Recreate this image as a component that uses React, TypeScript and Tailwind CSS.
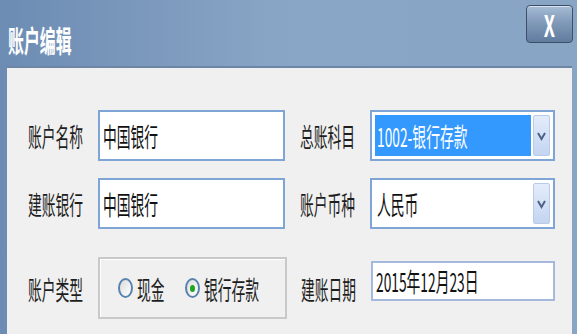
import React from 'react';

const font = { fontFamily: '"Noto Sans CJK SC", "Noto Sans", sans-serif' };

function Squeeze({ children, className = '' }: { children: React.ReactNode; className?: string }) {
  // the dialog in the picture is narrowed horizontally, so glyphs are tall and thin
  return (
    <span className={`inline-block origin-left scale-x-[0.53] whitespace-nowrap leading-none ${className}`}>
      {children}
    </span>
  );
}

function Label({ text }: { text: string }) {
  return (
    <div className="w-[70px] shrink-0 overflow-hidden text-[26px] text-[#1e1e1e]">
      <Squeeze>{text}</Squeeze>
    </div>
  );
}

function TextBox({ value, className = '' }: { value: string; className?: string }) {
  return (
    <div className={`flex shrink-0 items-center overflow-hidden bg-white border-2 border-[#7fa5d6] pl-[3px] text-[26px] text-[#111] ${className}`}>
      <Squeeze>{value}</Squeeze>
    </div>
  );
}

function Combo({ value, selected }: { value: string; selected?: boolean }) {
  return (
    <div className="flex h-[51px] w-[185px] shrink-0 items-stretch border-2 border-[#7fa5d6] bg-white p-[3px]">
      <div className={`flex min-w-0 flex-1 items-center overflow-hidden pl-[2px] text-[26px] ${selected ? 'bg-[#3399ff] text-white' : 'text-[#111]'}`}>
        <Squeeze>{value}</Squeeze>
      </div>
      <div className="ml-[2px] flex w-[17px] shrink-0 items-center justify-center rounded-[2px] border border-[#b9cbe8] bg-gradient-to-b from-[#e3ecfb] to-[#c4d5f1]">
        <svg width="9" height="10" viewBox="0 0 9 10">
          <path d="M1 2 L4.5 8 L8 2" fill="none" stroke="#4d6185" strokeWidth="2" />
        </svg>
      </div>
    </div>
  );
}

function Radio({ checked, label }: { checked?: boolean; label: string }) {
  return (
    <div className="flex items-center gap-[4px]">
      <div className="flex h-[20px] w-[15px] items-center justify-center rounded-[50%] border-2 border-[#5a82ae] bg-gradient-to-br from-[#dcdcdc] to-white">
        {checked && <div className="h-[7px] w-[5px] rounded-[50%] bg-[#1fa51f]" />}
      </div>
      <div className="overflow-hidden text-[26px] text-[#1e1e1e]" style={{ width: label.length * 14 }}>
        <Squeeze>{label}</Squeeze>
      </div>
    </div>
  );
}

export default function App() {
  return (
    <div className="h-[334px] w-[577px] overflow-hidden bg-gradient-to-r from-[#6d8cb3] via-[#8aa6c6] to-[#89a5c5]" style={font}>
      {/* Title bar */}
      <div className="flex h-[66px] items-start justify-between pl-[8px] pr-[4px]">
        <div className="mt-[17px] text-[30px] font-bold text-white">
          <Squeeze className="scale-x-[0.5]">账户编辑</Squeeze>
        </div>
        <div className="mt-[5px] flex h-[38px] w-[47px] items-center justify-center rounded-[4px] border border-[#3d4f68] bg-gradient-to-b from-[#a6bcd6] via-[#7e97b6] to-[#5f7c9f] shadow-[inset_0_1px_0_rgba(255,255,255,0.6)]">
          <span className="text-[30px] font-bold leading-none text-white">
            <span className="inline-block scale-x-[0.6]">X</span>
          </span>
        </div>
      </div>

      {/* Client area */}
      <div className="ml-[7px] mr-[5px] h-[268px] border-t-2 border-[#6e86a6] bg-[#f0f0f0]">
        <div className="flex flex-col pl-[21px] pt-[42px]">
          <div className="flex h-[51px] items-center">
            <Label text="账户名称" />
            <TextBox value="中国银行" className="h-[51px] w-[187px]" />
            <div className="w-[15px]" />
            <Label text="总账科目" />
            <Combo value="1002-银行存款" selected />
          </div>

          <div className="mt-[17px] flex h-[51px] items-center">
            <Label text="建账银行" />
            <TextBox value="中国银行" className="h-[51px] w-[187px]" />
            <div className="w-[15px]" />
            <Label text="账户币种" />
            <Combo value="人民币" />
          </div>

          <div className="mt-[28px] flex h-[62px] items-center">
            <Label text="账户类型" />
            <div className="flex h-[62px] w-[189px] shrink-0 items-center gap-[20px] border-2 border-[#c9c9c9] pl-[18px] shadow-[inset_1px_1px_0_#fff]">
              <Radio label="现金" />
              <Radio label="银行存款" checked />
            </div>
            <div className="w-[14px]" />
            <Label text="建账日期" />
            <TextBox value="2015年12月23日" className="mb-[14px] h-[40px] w-[184px] border-[#a4b9dd]" />
          </div>
        </div>
      </div>
    </div>
  );
}
